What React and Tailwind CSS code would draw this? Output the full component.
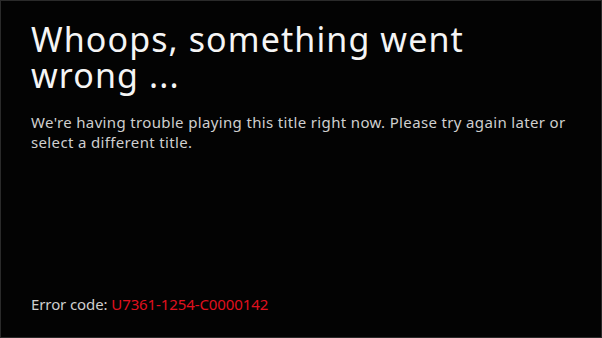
import React from 'react';

const App = () => {
  return (
    <div
      className="w-[602px] h-[338px] bg-[#030303] border border-[#2a2a2a] flex flex-col justify-between pl-[30px] pt-[20px] pb-[23px] text-white"
      style={{ fontFamily: '"Noto Sans", "Open Sans", sans-serif' }}
    >
      <div>
        <h1 className="text-[34px] leading-[36px] tracking-[1.1px] font-normal text-[#f5f5f5]">
          Whoops, something went
          <br />
          wrong ...
        </h1>
        <p className="mt-[19px] text-[15px] leading-[20px] tracking-[0.35px] text-[#cfcfcf] w-[560px]">
          We're having trouble playing this title right now. Please try again later or select a different title.
        </p>
      </div>
      <p className="text-[15px] leading-[20px] tracking-[-0.1px] text-[#cfcfcf]">
        Error code: <span className="text-[#e0101e]">U7361-1254-C0000142</span>
      </p>
    </div>
  );
};

export default App;
